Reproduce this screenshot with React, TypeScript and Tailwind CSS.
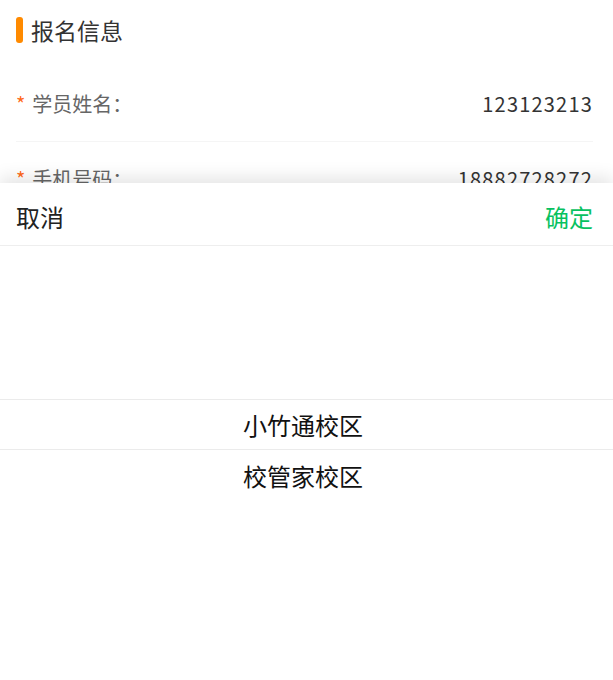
import React from "react";

const font = { fontFamily: '"Noto Sans CJK SC", "Noto Sans", sans-serif' };

export default function App() {
  return (
    <div className="relative h-[680px] w-full overflow-hidden bg-white" style={font}>
      <div className="pl-[16px] pr-[20px]">
        <div className="flex h-[67px] items-start pt-[17px]">
          <div className="flex h-[26px] items-center gap-[8px]">
            <div className="h-[26px] w-[7px] rounded-[3px] bg-[#ff8a00]" />
            <span className="text-[23px] leading-none text-[#333]">报名信息</span>
          </div>
        </div>
        <div className="flex h-[75px] items-center justify-between border-b border-[#f5f5f5]">
          <div className="flex items-center text-[20px] text-[#666]">
            <span className="mr-[7px] text-[#ff6a1a]">*</span>
            <span>学员姓名：</span>
          </div>
          <span className="text-[20px] tracking-[1.2px] text-[#333]">123123213</span>
        </div>
        <div className="flex h-[75px] items-center justify-between border-b border-[#f5f5f5]">
          <div className="flex items-center text-[20px] text-[#666]">
            <span className="mr-[7px] text-[#ff6a1a]">*</span>
            <span>手机号码：</span>
          </div>
          <span className="text-[20px] tracking-[1.2px] text-[#333]">18882728272</span>
        </div>
      </div>

      <div className="absolute inset-x-0 top-[183px] bottom-0 bg-white shadow-[0_-6px_16px_rgba(0,0,0,0.10)]">
        <div className="flex h-[63px] items-center justify-between border-b border-[#eeeeee] pl-[16px] pr-[20px] pt-[5px] text-[24px]">
          <span className="text-[#222]">取消</span>
          <span className="text-[#07c160]">确定</span>
        </div>
        <div className="pt-[153px]">
          <div className="flex h-[51px] items-center justify-center border-y border-[#ebebeb] pr-[7px] text-[24px] text-[#111]">
            小竹通校区
          </div>
          <div className="flex h-[52px] items-center justify-center pr-[7px] text-[24px] text-[#111]">
            校管家校区
          </div>
        </div>
      </div>
    </div>
  );
}
